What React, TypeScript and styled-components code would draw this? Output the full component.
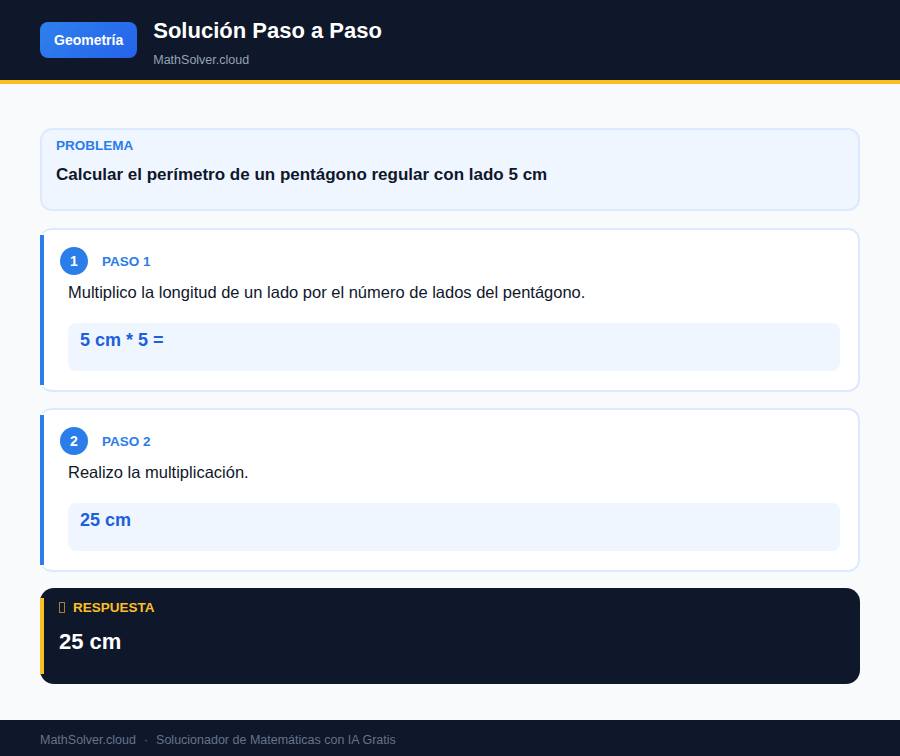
import React from 'react';
import styled, { createGlobalStyle } from 'styled-components';

const GlobalStyle = createGlobalStyle`
  body {
    margin: 0;
    background: #f8fafc;
    font-family: "Liberation Sans", Arial, sans-serif;
  }
`;

const Page = styled.div`
  min-height: 756px;
  display: flex;
  flex-direction: column;
`;

const Header = styled.header`
  height: 80px;
  background: #0f172a;
  border-bottom: 4px solid #fbbf24;
  display: flex;
  align-items: flex-start;
  padding: 18px 40px 0;
  gap: 16px;
  box-sizing: border-box;
  height: 84px;
`;

const Badge = styled.div`
  margin-top: 4px;
  background: linear-gradient(135deg, #2f80ed, #2563eb);
  color: #fff;
  font-weight: 700;
  font-size: 14px;
  padding: 0 14px;
  height: 36px;
  line-height: 36px;
  border-radius: 8px;
`;

const TitleBlock = styled.div`
  display: flex;
  flex-direction: column;
`;

const Title = styled.h1`
  margin: 0;
  color: #fff;
  font-size: 22px;
  font-weight: 700;
  line-height: 26px;
`;

const Subtitle = styled.div`
  margin-top: 9px;
  color: #94a3b8;
  font-size: 12.5px;
`;

const Main = styled.main`
  flex: 1;
  padding: 44px 40px 36px;
  display: flex;
  flex-direction: column;
  gap: 16px;
`;

const ProblemCard = styled.section`
  background: #eff6ff;
  border: 2px solid #dbeafe;
  border-radius: 12px;
  padding: 8px 14px 24px;
  margin-bottom: 1px;
`;

const Label = styled.div<{ $color: string }>`
  color: ${({ $color }) => $color};
  font-size: 13.5px;
  font-weight: 700;
  text-transform: uppercase;
  display: flex;
  align-items: center;
  gap: 8px;
`;

const ProblemText = styled.div`
  margin-top: 12px;
  font-size: 17px;
  font-weight: 700;
  color: #0f172a;
`;

const StepCard = styled.section`
  background: #fff;
  border: 2px solid #dbeafe;
  border-left: none;
  border-radius: 12px;
  display: flex;
  height: 164px;
  box-sizing: border-box;
`;

const Accent = styled.div<{ $color: string }>`
  width: 4px;
  flex-shrink: 0;
  background: ${({ $color }) => $color};
  margin: 5px 0 5px;
`;

const StepBody = styled.div`
  flex: 1;
  padding: 17px 18px 16px 16px;
`;

const StepHead = styled.div`
  display: flex;
  align-items: center;
  gap: 14px;
`;

const Num = styled.div`
  width: 28px;
  height: 28px;
  border-radius: 50%;
  background: #2b7de9;
  color: #fff;
  font-weight: 700;
  font-size: 14px;
  display: flex;
  align-items: center;
  justify-content: center;
`;

const StepText = styled.p`
  margin: 8px 0 0 8px;
  font-size: 16.5px;
  color: #0f172a;
`;

const Formula = styled.div`
  margin: 21px 0 0 8px;
  background: #eff6ff;
  border-radius: 8px;
  height: 48px;
  box-sizing: border-box;
  padding: 7px 12px;
  color: #1d5fdc;
  font-weight: 700;
  font-size: 18px;
`;

const AnswerCard = styled.section`
  background: #0f172a;
  border-radius: 14px;
  display: flex;
  height: 96px;
`;

const AnswerBody = styled.div`
  padding: 12px 15px;
`;

const Tofu = styled.span`
  display: inline-block;
  width: 4px;
  height: 9px;
  border: 1px solid #a3822a;
`;

const AnswerValue = styled.div`
  margin-top: 14px;
  color: #fff;
  font-size: 22px;
  font-weight: 700;
`;

const Footer = styled.footer`
  height: 40px;
  background: #0f172a;
  color: #64748b;
  font-size: 12.5px;
  display: flex;
  align-items: center;
  padding: 0 40px;
  gap: 8px;
`;

const steps = [
  { n: 1, text: 'Multiplico la longitud de un lado por el número de lados del pentágono.', formula: '5 cm * 5 =' },
  { n: 2, text: 'Realizo la multiplicación.', formula: '25 cm' },
];

export default function App() {
  return (
    <Page>
      <GlobalStyle />
      <Header>
        <Badge>Geometría</Badge>
        <TitleBlock>
          <Title>Solución Paso a Paso</Title>
          <Subtitle>MathSolver.cloud</Subtitle>
        </TitleBlock>
      </Header>
      <Main>
        <ProblemCard>
          <Label $color="#2b7de9">Problema</Label>
          <ProblemText>Calcular el perímetro de un pentágono regular con lado 5 cm</ProblemText>
        </ProblemCard>
        {steps.map((s) => (
          <StepCard key={s.n}>
            <Accent $color="#2b7de9" />
            <StepBody>
              <StepHead>
                <Num>{s.n}</Num>
                <Label $color="#2b7de9">Paso {s.n}</Label>
              </StepHead>
              <StepText>{s.text}</StepText>
              <Formula>{s.formula}</Formula>
            </StepBody>
          </StepCard>
        ))}
        <AnswerCard>
          <Accent $color="#fbbf24" style={{ margin: '10px 0' }} />
          <AnswerBody>
            <Label $color="#fbbf24">
              <Tofu />
              Respuesta
            </Label>
            <AnswerValue>25 cm</AnswerValue>
          </AnswerBody>
        </AnswerCard>
      </Main>
      <Footer>
        <span>MathSolver.cloud</span>
        <span>·</span>
        <span>Solucionador de Matemáticas con IA Gratis</span>
      </Footer>
    </Page>
  );
}
